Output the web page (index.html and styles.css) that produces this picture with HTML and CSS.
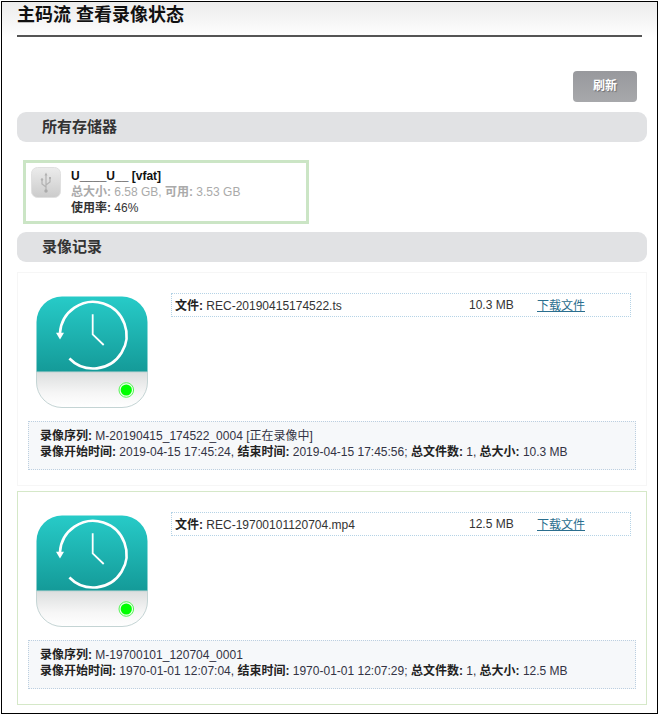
FILE: index.html
```html
<!DOCTYPE html>
<html lang="zh">
<head>
<meta charset="utf-8">
<title>主码流 查看录像状态</title>
<link rel="stylesheet" href="styles.css">
</head>
<body>
<div class="frame">
  <h1 class="title">主码流 查看录像状态</h1>
  <div class="toolbar"><button class="btn" type="button">刷新</button></div>
  <h2 class="bar">所有存储器</h2>
  <div class="storage">
    <svg class="usb" width="30" height="31" viewBox="0 0 30 31">
      <defs><linearGradient id="ug" x1="0" y1="0" x2="0" y2="1"><stop offset="0" stop-color="#ececec"/><stop offset="1" stop-color="#cbcbcb"/></linearGradient></defs>
      <rect x="0.5" y="0.5" width="29" height="30" rx="6" fill="url(#ug)" stroke="#e0e0e0"/>
      <path d="M15 7v17M15 20l-4-3v-4M15 18l4-3v-3" fill="none" stroke="#b2b2b2" stroke-width="1.2"/>
      <path d="M13.5 8.5L15 5.5l1.500 3z" fill="#b2b2b2"/>
      <circle cx="15" cy="24" r="1.700" fill="#aaa"/>
      <circle cx="11" cy="12.500" r="1.200" fill="#b2b2b2"/>
      <rect x="18" y="10" width="2" height="2" fill="#b2b2b2"/>
    </svg>
    <div class="storage-text">
      <div class="dev">U____U__ [vfat]</div>
      <div class="muted"><b>总大小:</b> 6.58 GB, <b>可用:</b> 3.53 GB</div>
      <div><b>使用率:</b> 46%</div>
    </div>
  </div>
  <h2 class="bar bar-rec">录像记录</h2>

  <div class="record">
    <div class="rec-top">
      <svg class="disk" width="112" height="112" viewBox="0 0 112 112">
        <defs>
          <linearGradient id="t1" x1="0" y1="0" x2="0" y2="1"><stop offset="0" stop-color="#27cbc8"/><stop offset="1" stop-color="#149a98"/></linearGradient>
          <linearGradient id="g1" x1="0" y1="0" x2="0" y2="1"><stop offset="0" stop-color="#dcdede"/><stop offset="0.6" stop-color="#f6f6f6"/><stop offset="1" stop-color="#ffffff"/></linearGradient>
        </defs>
        <path d="M0.500 76V26A25.500 25.500 0 0 1 26 0.500H86A25.500 25.500 0 0 1 111.500 26V76Z" fill="url(#t1)"/>
        <path d="M0.500 76H111.500V86A25.500 25.500 0 0 1 86 111.500H26A25.500 25.500 0 0 1 0.500 86Z" fill="url(#g1)" stroke="#c4d4d4"/>
        <path d="M24 37A33.300 33.300 0 1 1 33.400 62.500" fill="none" stroke="#fff" stroke-width="2.600"/>
        <path d="M20 36.700H28L24 43.500Z" fill="#fff"/>
        <path d="M56.700 18.300V38.300L67.700 49" fill="none" stroke="#fff" stroke-width="1.800"/>
        <circle cx="90.300" cy="94" r="7.300" fill="#e8ffe8" stroke="#55f555" stroke-width="1"/>
        <circle cx="90.300" cy="94" r="5.600" fill="#0f0"/>
      </svg>
      <div class="file">
        <span class="file-name"><b>文件:</b> REC-20190415174522.ts</span>
        <span class="file-size">10.3 MB</span>
        <a class="file-link" href="#">下载文件</a>
      </div>
    </div>
    <div class="info">
      <div><b>录像序列:</b> M-20190415_174522_0004 [正在录像中]</div>
      <div><b>录像开始时间:</b> 2019-04-15 17:45:24, <b>结束时间:</b> 2019-04-15 17:45:56; <b>总文件数:</b> 1, <b>总大小:</b> 10.3 MB</div>
    </div>
  </div>

  <div class="record record-alt">
    <div class="rec-top">
      <svg class="disk" width="112" height="112" viewBox="0 0 112 112">
        <defs>
          <linearGradient id="t2" x1="0" y1="0" x2="0" y2="1"><stop offset="0" stop-color="#27cbc8"/><stop offset="1" stop-color="#149a98"/></linearGradient>
          <linearGradient id="g2" x1="0" y1="0" x2="0" y2="1"><stop offset="0" stop-color="#dcdede"/><stop offset="0.6" stop-color="#f6f6f6"/><stop offset="1" stop-color="#ffffff"/></linearGradient>
        </defs>
        <path d="M0.500 76V26A25.500 25.500 0 0 1 26 0.500H86A25.500 25.500 0 0 1 111.500 26V76Z" fill="url(#t2)"/>
        <path d="M0.500 76H111.500V86A25.500 25.500 0 0 1 86 111.500H26A25.500 25.500 0 0 1 0.500 86Z" fill="url(#g2)" stroke="#c4d4d4"/>
        <path d="M24 37A33.300 33.300 0 1 1 33.400 62.500" fill="none" stroke="#fff" stroke-width="2.600"/>
        <path d="M20 36.700H28L24 43.500Z" fill="#fff"/>
        <path d="M56.700 18.300V38.300L67.700 49" fill="none" stroke="#fff" stroke-width="1.800"/>
        <circle cx="90.300" cy="94" r="7.300" fill="#e8ffe8" stroke="#55f555" stroke-width="1"/>
        <circle cx="90.300" cy="94" r="5.600" fill="#0f0"/>
      </svg>
      <div class="file">
        <span class="file-name"><b>文件:</b> REC-19700101120704.mp4</span>
        <span class="file-size">12.5 MB</span>
        <a class="file-link" href="#">下载文件</a>
      </div>
    </div>
    <div class="info">
      <div><b>录像序列:</b> M-19700101_120704_0001</div>
      <div><b>录像开始时间:</b> 1970-01-01 12:07:04, <b>结束时间:</b> 1970-01-01 12:07:29; <b>总文件数:</b> 1, <b>总大小:</b> 12.5 MB</div>
    </div>
  </div>
</div>
</body>
</html>
```

FILE: styles.css
```css
* { box-sizing: border-box; }
html, body { margin: 0; padding: 0; background: #fff; }
body {
  font-family: "Liberation Sans", "Noto Sans CJK SC", sans-serif;
  font-size: 12px;
  line-height: 16px;
  color: #333;
}
.frame {
  width: 657px;
  height: 713px;
  margin: 1px 0 0 1px;
  border: 1px solid #000;
  padding: 0 10px 0 15px;
  background: linear-gradient(#ececec, #fff) no-repeat 0 0 / 100% 36px;
  overflow: hidden;
}
.title {
  margin: 0 5px 0 0;
  height: 35px;
  border-bottom: 2px solid #555;
  font-size: 18px;
  line-height: 26px;
  font-weight: 700;
  color: #111;
}
.toolbar {
  display: flex;
  justify-content: flex-end;
  padding: 34px 10px 10px 0;
}
.btn {
  width: 64px;
  height: 31px;
  padding: 0;
  border: 0;
  border-radius: 4px;
  background: linear-gradient(#98999d, #a7a8ab);
  font: 700 12px/31px "Liberation Sans", "Noto Sans CJK SC", sans-serif;
  color: #fff;
  text-shadow: 1px 1px 1px #6d6e72;
}
.bar {
  margin: 0;
  height: 30px;
  padding-left: 25px;
  border-radius: 9px;
  background: #e1e2e4;
  font-size: 15px;
  line-height: 30px;
  font-weight: 700;
  color: #333;
}
.bar-rec { margin-bottom: 10px; }
.storage {
  display: flex;
  gap: 10px;
  width: 286px;
  height: 64px;
  margin: 18px 0 8px 6px;
  padding: 4px 5px;
  border: 3px solid #cbe5c5;
}
.usb { flex: none; }
.storage-text { padding-top: 1px; color: #333; }
.dev { color: #111; font-weight: 700; }
.muted { color: #aaa; }
.record {
  height: 214px;
  margin-bottom: 5px;
  padding: 20px 10px 0;
  border: 1px solid #f6f6f6;
}
.record-alt { border-color: #d5e8c8; }
.rec-top { display: flex; align-items: flex-start; }
.disk { flex: none; margin: 3px 23px 0 8px; }
.file {
  display: flex;
  width: 460px;
  height: 24px;
  padding: 3px;
  line-height: 18px;
  border: 1px dotted #b5d3e6;
}
.file-name { width: 294px; }
.file-size { width: 68px; margin-top: -1px; }
.file-link { color: #2a6e8e; text-decoration: underline; }
.info {
  width: 608px;
  height: 49px;
  margin-top: 13px;
  padding: 6px 11px 4px;
  border: 1px dotted #bccfe0;
  background: #f6f8fa;
  color: #334;
}
.info b, .file b { color: #222; }
```
